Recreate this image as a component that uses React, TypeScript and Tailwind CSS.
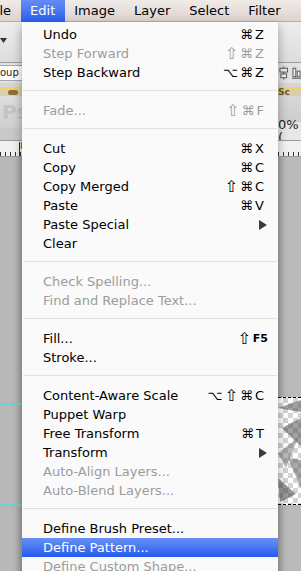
import React from 'react';

type Row =
  | { sep: true }
  | { label: string; sc?: string[]; off?: boolean; sub?: boolean; hi?: boolean; fkey?: boolean };

const rows: Row[] = [
  { label: 'Undo', sc: ['⌘', 'Z'] },
  { label: 'Step Forward', sc: ['⇧', '⌘', 'Z'], off: true },
  { label: 'Step Backward', sc: ['⌥', '⌘', 'Z'] },
  { sep: true },
  { label: 'Fade...', sc: ['⇧', '⌘', 'F'], off: true },
  { sep: true },
  { label: 'Cut', sc: ['⌘', 'X'] },
  { label: 'Copy', sc: ['⌘', 'C'] },
  { label: 'Copy Merged', sc: ['⇧', '⌘', 'C'] },
  { label: 'Paste', sc: ['⌘', 'V'] },
  { label: 'Paste Special', sub: true },
  { label: 'Clear' },
  { sep: true },
  { label: 'Check Spelling...', off: true },
  { label: 'Find and Replace Text...', off: true },
  { sep: true },
  { label: 'Fill...', fkey: true },
  { label: 'Stroke...' },
  { sep: true },
  { label: 'Content-Aware Scale', sc: ['⌥', '⇧', '⌘', 'C'] },
  { label: 'Puppet Warp' },
  { label: 'Free Transform', sc: ['⌘', 'T'] },
  { label: 'Transform', sub: true },
  { label: 'Auto-Align Layers...', off: true },
  { label: 'Auto-Blend Layers...', off: true },
  { sep: true },
  { label: 'Define Brush Preset...' },
  { label: 'Define Pattern...', hi: true },
  { label: 'Define Custom Shape...', off: true },
];

const menus = ['File', 'Edit', 'Image', 'Layer', 'Select', 'Filter'];

function Arrow({ white }: { white?: boolean }) {
  return (
    <svg width="8" height="10" viewBox="0 0 8 10" className="mr-[-3px]">
      <path d="M0 0 L8 5 L0 10 Z" fill={white ? '#fff' : '#3a3a3a'} />
    </svg>
  );
}

// shift glyph is small in DejaVu, so bump it up a bit
function Key({ c }: { c: string }) {
  if (c === '⇧') return <span className="text-[16px] leading-[19px]">⇧</span>;
  return <span>{c}</span>;
}

function MenuRow({ row }: { row: Row }) {
  if ('sep' in row) {
    return (
      <div className="h-[19px] pt-[8px]">
        <div className="mx-[1px] h-px bg-[#e1e1e1]" />
      </div>
    );
  }
  const color = row.hi ? 'text-white' : row.off ? 'text-[#9c9c9c]' : 'text-black';
  return (
    <div
      className={`flex h-[19px] items-center justify-between pl-[21px] pr-[14px] leading-[19px] ${color} ${
        row.hi ? 'bg-gradient-to-b from-[#6a90f6] to-[#2459ee]' : ''
      }`}
    >
      <span className="whitespace-nowrap">{row.label}</span>
      {row.sc && (
        <span className="flex h-[19px] items-center gap-[2px]">
          {row.sc.map((c, i) => (
            <Key key={i} c={c} />
          ))}
        </span>
      )}
      {row.sub && <Arrow white={row.hi} />}
      {row.fkey && (
        <span className="mr-[-4px] flex h-[19px] items-center gap-[2px]">
          <Key c="⇧" />
          <span className="text-[11px] font-bold">F5</span>
        </span>
      )}
    </div>
  );
}

function LeftStrip() {
  return (
    <div className="flex w-[22px] flex-col overflow-hidden">
      <div className="relative h-[40px] bg-gradient-to-b from-[#eeeeee] to-[#dcdcdc]">
        <svg width="7" height="5" viewBox="0 0 7 5" className="absolute left-0 top-[16px]">
          <path d="M0 0 L7 0 L3.5 5 Z" fill="#333" />
        </svg>
      </div>
      <div className="h-px bg-[#9d9d9d]" />
      <div className="flex h-[20px] items-center bg-[#e2e2e2] py-[2px]">
        <div className="flex h-[16px] w-full items-center border-y border-[#a8a8a8] bg-white text-[10px] leading-none text-[#222]">
          oup
        </div>
      </div>
      <div className="h-[4px] bg-[#d6d6d6]" />
      <div className="h-[2px] bg-[#f2d070]" />
      <div className="flex h-[7px] items-center bg-[#d9cfa8]">
        <div className="ml-[8px] h-[5px] w-[10px] rounded-full bg-[#8a7040]" />
      </div>
      <div className="flex h-[32px] items-center bg-gradient-to-b from-[#dedede] to-[#cfcfcf] pl-[2px] text-[20px] font-bold text-[#c4c4c4]">
        Ps
      </div>
      <div className="h-[12px] bg-[#c9c9c9]" />
      <div className="relative h-[17px] border-y border-[#9a9a9a] bg-[#f1f1f1]">
        <div className="absolute bottom-0 left-0 right-0 h-[4px] bg-[repeating-linear-gradient(90deg,#333_0_1px,transparent_1px_5px)]" />
        <div className="absolute bottom-0 left-[19px] h-[14px] w-px bg-[#333]" />
        <div className="absolute left-[20px] top-[1px] text-[9px] leading-none text-[#333]">8</div>
      </div>
      <div className="flex flex-1 flex-col bg-gradient-to-r from-[#b8b8b8] from-70% to-[#a2a2a2]">
        <div className="h-[246px]" />
        <div className="h-[2px] bg-[#6fd3d6]" />
        <div className="h-[99px]" />
        <div className="h-[2px] bg-[#6fd3d6]" />
      </div>
    </div>
  );
}

function RightStrip() {
  return (
    <div className="flex w-[23px] flex-col overflow-hidden">
      <div className="h-[40px] bg-gradient-to-b from-[#eeeeee] to-[#dcdcdc]" />
      <div className="h-px bg-[#9d9d9d]" />
      <div className="flex h-[20px] items-center gap-[3px] bg-[#e2e2e2] pl-[1px]">
        <svg width="10" height="14" viewBox="0 0 10 14">
          <rect x="4.5" y="0" width="1" height="14" fill="#555" />
          <rect x="1" y="2" width="8" height="4" fill="#eee" stroke="#555" />
          <rect x="2" y="8" width="6" height="4" fill="#eee" stroke="#555" />
        </svg>
        <svg width="10" height="14" viewBox="0 0 10 14">
          <rect x="0" y="12" width="10" height="1" fill="#555" />
          <rect x="1" y="2" width="3" height="9" fill="#eee" stroke="#555" />
          <rect x="5.5" y="5" width="3" height="6" fill="#eee" stroke="#555" />
        </svg>
      </div>
      <div className="h-[4px] bg-[#d6d6d6]" />
      <div className="h-[2px] bg-[#f2d070]" />
      <div className="flex h-[7px] items-center bg-[#d9cfa8] text-[9px] font-bold leading-none text-[#6d5a30]">
        Sc
      </div>
      <div className="h-[26px] bg-gradient-to-b from-[#d8d8d8] to-[#cdcdcd]" />
      <div className="flex h-[18px] items-center bg-[#e8e8e8] text-[13px] leading-none text-[#222]">
        0% (
      </div>
      <div className="relative h-[17px] border-y border-[#9a9a9a] bg-[#f1f1f1]">
        <div className="absolute bottom-0 left-0 right-0 h-[4px] bg-[repeating-linear-gradient(90deg,#333_0_1px,transparent_1px_5px)]" />
      </div>
      <div className="flex flex-1 flex-col bg-gradient-to-r from-[#a6a6a6] to-[#bababa] to-30%">
        <div className="h-[240px]" />
        <div className="relative h-[108px] border-y border-dashed border-black bg-[repeating-conic-gradient(#d4d4d4_0%_25%,#ffffff_0%_50%)] bg-[length:10px_10px]">
          <svg width="23" height="106" viewBox="0 0 23 106" className="absolute inset-0">
            <path d="M0 10 L23 2 L23 14 Z" fill="#555" opacity="0.55" />
            <path d="M4 30 L23 20 L23 48 Z" fill="#444" opacity="0.5" />
            <path d="M0 55 L20 40 L8 70 Z" fill="#666" opacity="0.45" />
            <path d="M10 60 L23 62 L23 90 Z" fill="#555" opacity="0.5" />
            <path d="M0 80 L18 96 L2 104 Z" fill="#444" opacity="0.55" />
          </svg>
        </div>
      </div>
    </div>
  );
}

export default function App() {
  return (
    <div className="flex h-[571px] w-[301px] flex-col overflow-hidden bg-[#b8b8b8] font-['DejaVu_Sans',sans-serif] text-[13px]">
      <div className="flex h-[22px] shrink-0 items-center border-b border-[#b9ada4] bg-gradient-to-b from-[#f1ebe8] to-[#ddd3cf] text-[13px] leading-[22px] text-black">
        <div className="ml-[-20.2px] flex">
          {menus.map((m) => (
            <div
              key={m}
              className={`px-[9.5px] ${
                m === 'Edit' ? 'bg-gradient-to-b from-[#648cf4] to-[#2a5fee] text-white' : ''
              }`}
            >
              {m}
            </div>
          ))}
        </div>
      </div>
      <div className="flex flex-1">
        <LeftStrip />
        <div className="relative z-10 w-[256px] bg-[#fafafa] pt-[3px] shadow-[0_4px_10px_rgba(0,0,0,0.35)]">
          {rows.map((r, i) => (
            <MenuRow key={i} row={r} />
          ))}
        </div>
        <RightStrip />
      </div>
    </div>
  );
}
